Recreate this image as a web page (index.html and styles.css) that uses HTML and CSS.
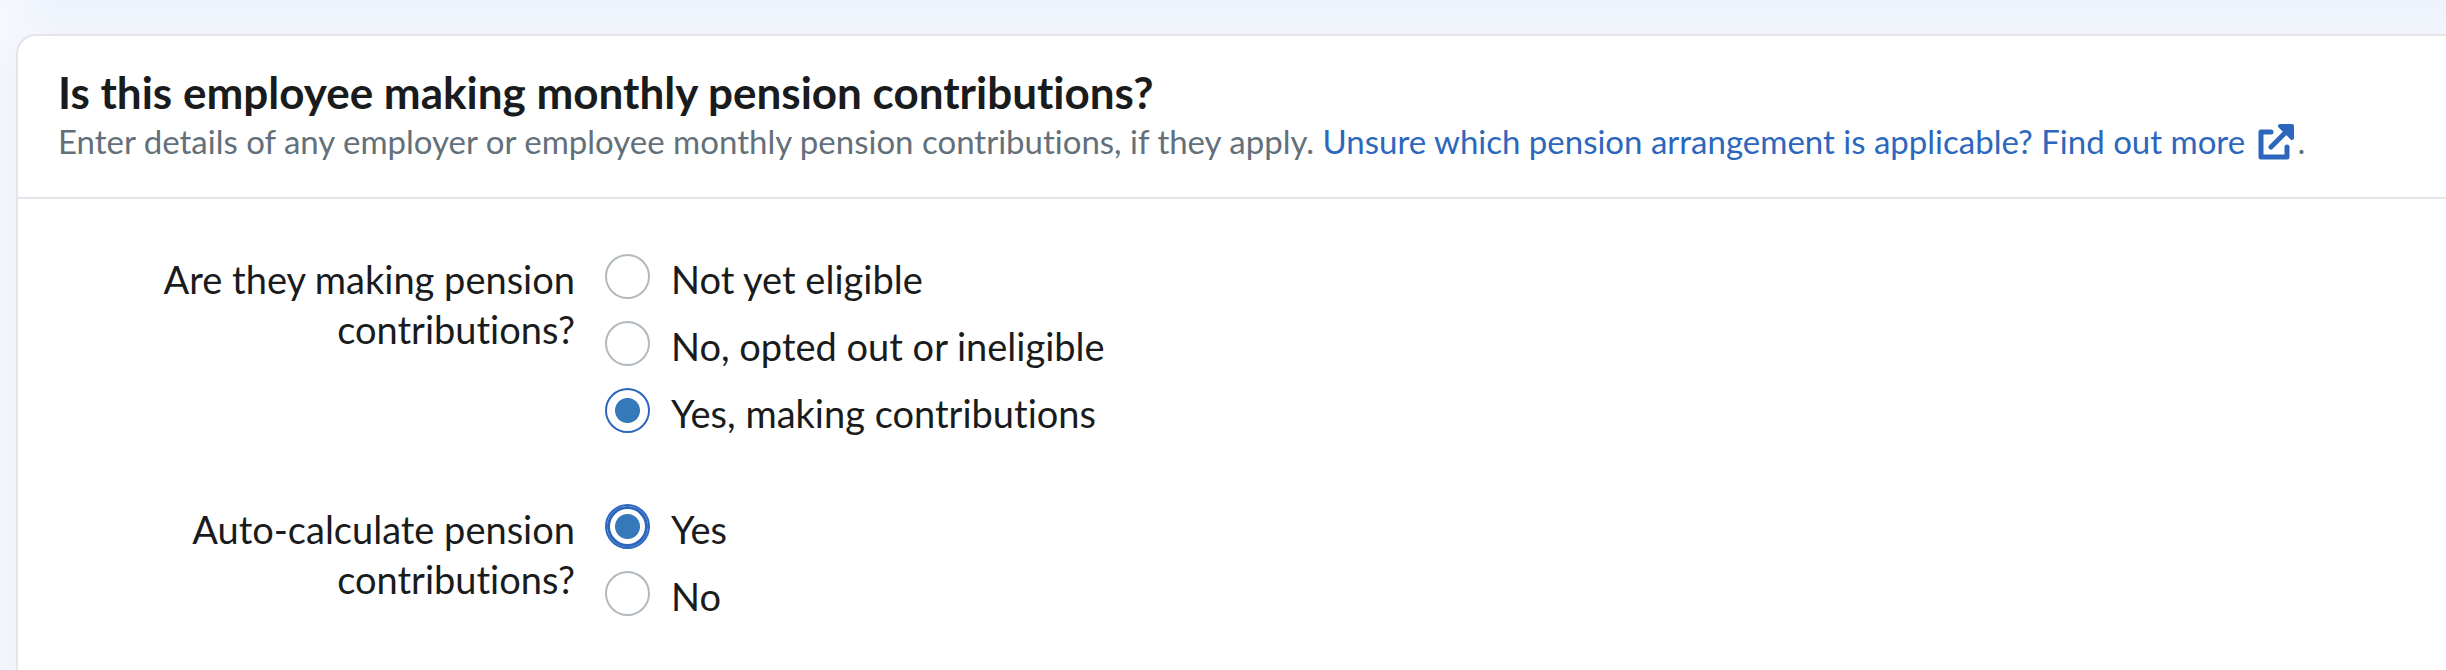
FILE: index.html
```html
<!DOCTYPE html>
<html lang="en">
<head>
    <meta charset="UTF-8">
    <meta name="viewport" content="width=device-width, initial-scale=1.0">
    <title>Pension contributions</title>
    <link rel="stylesheet" href="styles.css">
</head>
<body>
    <main class="panel">
        <header class="panel-header">
            <h1 class="panel-title">Is this employee making monthly pension contributions?</h1>
            <p class="panel-text">Enter details of any employer or employee monthly pension contributions, if they apply. <a class="link" href="#">Unsure which pension arrangement is applicable? Find out more <svg class="link-icon" viewBox="0 0 36 36" aria-hidden="true">
                <path d="M13 8H3v25h26V23" />
                <path d="M13 23L31 5" />
                <path d="M22 2h12v12z" class="link-icon-head" />
            </svg></a>.</p>
        </header>
        <form class="form">
            <div class="row" role="radiogroup" aria-labelledby="making-label">
                <div class="row-label" id="making-label">Are they making pension contributions?</div>
                <div class="options">
                    <label class="option"><input class="radio" type="radio" name="making">Not yet eligible</label>
                    <label class="option"><input class="radio" type="radio" name="making">No, opted out or ineligible</label>
                    <label class="option"><input class="radio" type="radio" name="making" checked>Yes, making contributions</label>
                </div>
            </div>
            <div class="row" role="radiogroup" aria-labelledby="auto-label">
                <div class="row-label" id="auto-label">Auto-calculate pension contributions?</div>
                <div class="options">
                    <label class="option"><input class="radio radio-active" type="radio" name="auto" checked>Yes</label>
                    <label class="option"><input class="radio" type="radio" name="auto">No</label>
                </div>
            </div>
        </form>
    </main>
</body>
</html>
```

FILE: styles.css
```css
* {
    box-sizing: border-box;
}
body {
    margin: 0;
    padding: 34px 0 0 16px;
    min-height: 100vh;
    display: flex;
    background-color: #eff4fc;
    background-image:
        radial-gradient(circle at 0 20px, #f6f9fe, transparent 60px),
        linear-gradient(#edf2fc, #f1f5fb 34px, transparent 34px),
        linear-gradient(to right, #f3f7fb, #eef3fd 16px);
    color: #1a1b1c;
    font-family: Lato, sans-serif;
    font-variant-ligatures: none;
}
.panel {
    flex: 1;
    background-color: white;
    border: 2px solid #e3e5eb;
    border-right: 0;
    border-bottom: 0;
    border-radius: 20px 0 0 0;
}
.panel-header {
    padding: 30px 40px 33px;
    border-bottom: 2px solid #e3e5eb;
}
.panel-title {
    margin: 0;
    font-size: 44px;
    line-height: 52px;
}
.panel-text {
    margin: 0;
    color: #63707a;
    font-size: 33px;
    line-height: 46px;
}
.link {
    color: #2c67bd;
    text-decoration: none;
}
.link-icon {
    width: 36px;
    height: 36px;
    margin: 0 4px;
    vertical-align: -6px;
    fill: none;
    stroke: #2c67bd;
    stroke-width: 5;
    stroke-linecap: round;
    stroke-linejoin: round;
}
.link-icon-head {
    fill: #2c67bd;
    stroke-width: 4;
}
.form {
    padding: 55px 40px 0;
}
.row {
    display: flex;
    gap: 30px;
    margin-bottom: 50px;
    font-size: 38px;
    line-height: 50px;
}
.row:last-child {
    margin-bottom: 0;
}
.row-label {
    width: 517px;
    padding-left: 60px;
    text-align: right;
}
.option {
    display: flex;
    gap: 21px;
    margin-bottom: 17px;
}
.option:last-child {
    margin-bottom: 16px;
}
.radio {
    appearance: none;
    width: 45px;
    height: 45px;
    margin: 0;
    border: 2px solid #b3babf;
    border-radius: 50%;
    background-color: white;
}
.radio:checked {
    border-color: #2c67bd;
    background-image: radial-gradient(circle, #3579ba 12px, transparent 13px);
}
.radio-active {
    box-shadow: inset 0 0 0 3px #2c67bd;
}
```
